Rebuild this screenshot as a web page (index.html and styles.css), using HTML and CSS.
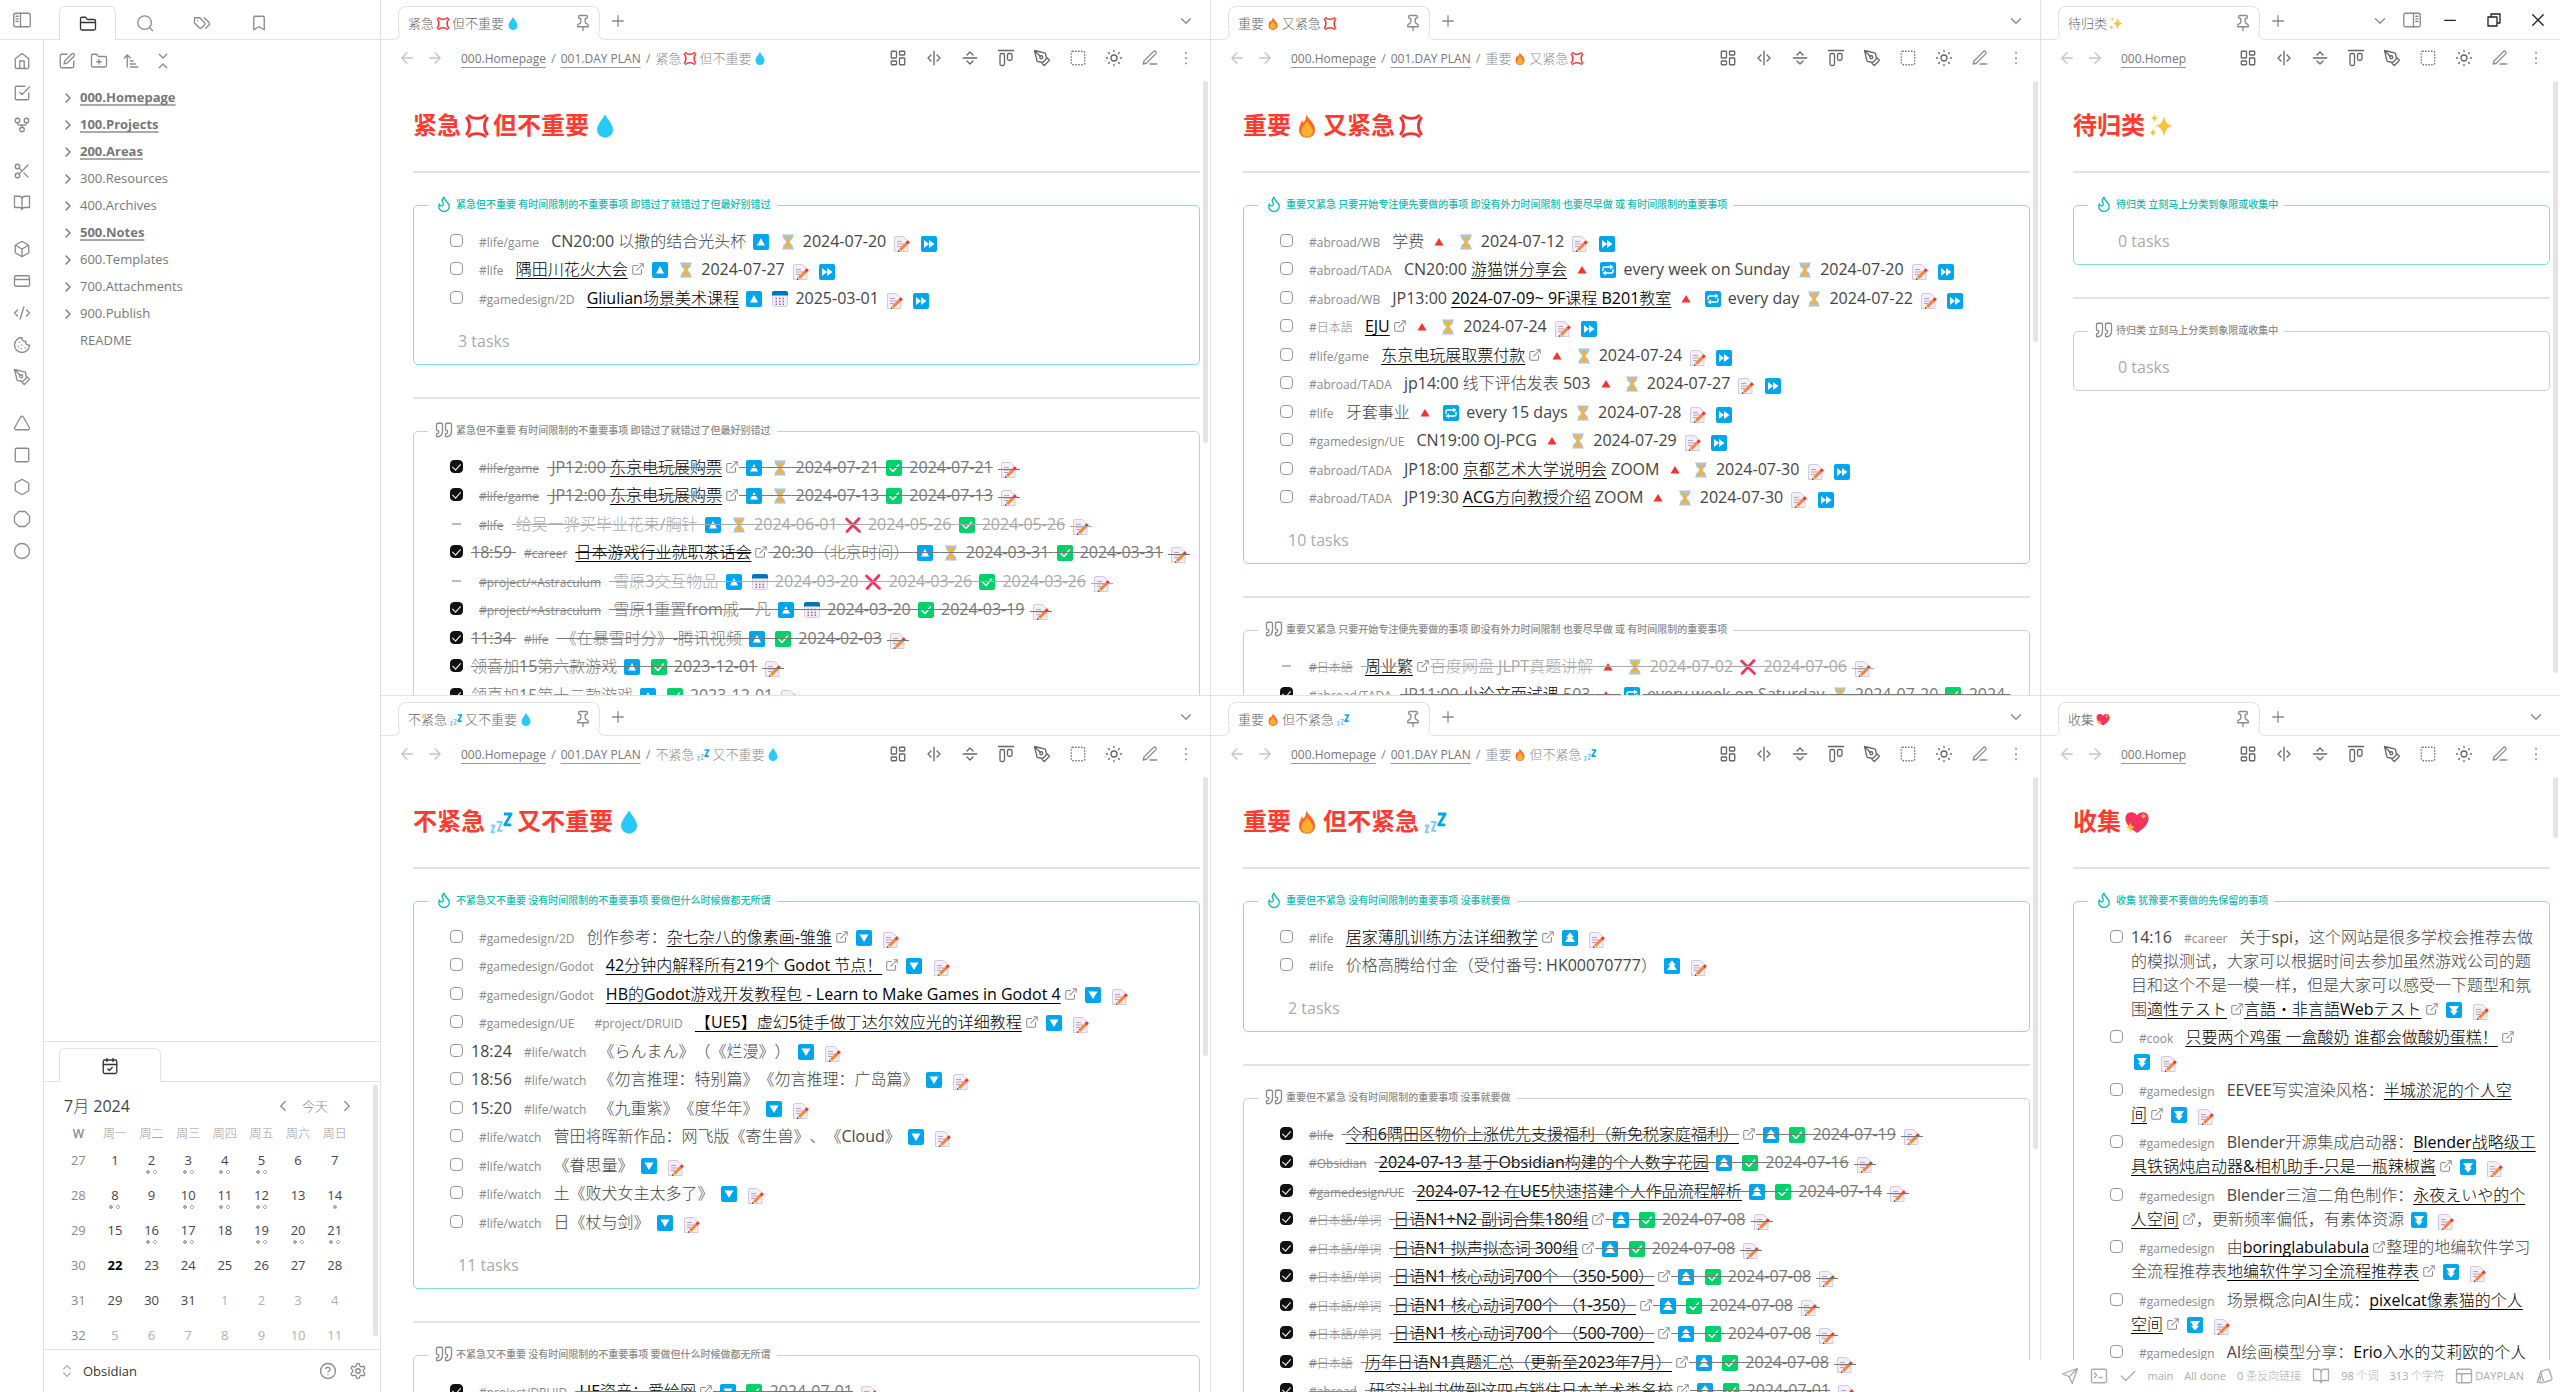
FILE: index.html
```html
<!DOCTYPE html>
<html lang="zh-CN">
<head>
<meta charset="utf-8">
<meta name="viewport" content="width=device-width, initial-scale=1">
<title>DAYPLAN - Obsidian</title>
<link rel="stylesheet" href="styles.css">
</head>
<body>
<svg class="sprite" aria-hidden="true">
  <!-- interface icons -->
  <symbol id="panel-left" viewBox="0 0 24 24"><rect x="1" y="3" width="22" height="18" rx="2.5"/><path d="M10 3v18M4 7h3M4 10.5h3M4 14h3"/></symbol>
  <symbol id="panel-right" viewBox="0 0 24 24"><rect x="1" y="3" width="22" height="18" rx="2.5"/><path d="M14 3v18M17 7h3M17 10.5h3M17 14h3"/></symbol>
  <symbol id="folder" viewBox="0 0 24 24"><path d="M20 20a2 2 0 0 0 2-2V8a2 2 0 0 0-2-2h-7.9a2 2 0 0 1-1.69-.9L9.6 3.9A2 2 0 0 0 7.93 3H4a2 2 0 0 0-2 2v13a2 2 0 0 0 2 2ZM2 10h20"/></symbol>
  <symbol id="search" viewBox="0 0 24 24"><circle cx="11.5" cy="11.5" r="9"/><path d="m22 22-4-4"/></symbol>
  <symbol id="tags" viewBox="0 0 24 24"><path d="M9 5H2v7l6.29 6.29c.94.94 2.48.94 3.42 0l3.58-3.58c.94-.94.94-2.48 0-3.42L9 5ZM6 9.01V9M15 5l6.3 6.3a2.4 2.4 0 0 1 0 3.4L17 19"/></symbol>
  <symbol id="bookmark" viewBox="0 0 24 24"><path d="m19 21-7-4-7 4V5a2 2 0 0 1 2-2h10a2 2 0 0 1 2 2v16z"/></symbol>
  <symbol id="home" viewBox="0 0 24 24"><path d="m3 9 9-7 9 7v11a2 2 0 0 1-2 2H5a2 2 0 0 1-2-2zM9 22V12h6v10"/></symbol>
  <symbol id="check-square" viewBox="0 0 24 24"><path d="m9 11 3 3L22 4M21 12v7a2 2 0 0 1-2 2H5a2 2 0 0 1-2-2V5a2 2 0 0 1 2-2h11"/></symbol>
  <symbol id="fork" viewBox="0 0 24 24"><circle cx="12" cy="18" r="3"/><circle cx="6" cy="6" r="3"/><circle cx="18" cy="6" r="3"/><path d="M18 9v1a2 2 0 0 1-2 2H8a2 2 0 0 1-2-2V9M12 12v3"/></symbol>
  <symbol id="scissors" viewBox="0 0 24 24"><circle cx="6" cy="6" r="3"/><circle cx="6" cy="18" r="3"/><path d="M20 4 8.12 15.88M14.47 14.48 20 20M8.12 8.12 12 12"/></symbol>
  <symbol id="book" viewBox="0 0 24 24"><path d="M2 3h6a4 4 0 0 1 4 4v14a3 3 0 0 0-3-3H2zM22 3h-6a4 4 0 0 0-4 4v14a3 3 0 0 1 3-3h7z"/></symbol>
  <symbol id="box" viewBox="0 0 24 24"><path d="M21 8a2 2 0 0 0-1-1.73l-7-4a2 2 0 0 0-2 0l-7 4A2 2 0 0 0 3 8v8a2 2 0 0 0 1 1.73l7 4a2 2 0 0 0 2 0l7-4A2 2 0 0 0 21 16ZM3.3 7l8.7 5 8.7-5M12 22V12"/></symbol>
  <symbol id="card" viewBox="0 0 24 24"><rect x="2" y="5" width="20" height="14" rx="2"/><path d="M2 10h20"/></symbol>
  <symbol id="code" viewBox="0 0 24 24"><path d="m18 16 4-4-4-4M6 8l-4 4 4 4M14.5 4l-5 16"/></symbol>
  <symbol id="cookie" viewBox="0 0 24 24"><path d="M12 2a10 10 0 1 0 10 10 4 4 0 0 1-5-5 4 4 0 0 1-5-5M8.5 8.5v.01M16 15.5v.01M12 12v.01M11 17v.01M7 14v.01"/></symbol>
  <symbol id="pen-tool" viewBox="0 0 24 24"><path d="m12 19 7-7 3 3-7 7-3-3zM18 13l-1.500-7.500L2 2l3.500 14.500L13 18l5-5zM2 2l7.586 7.586"/><circle cx="11" cy="11" r="2"/></symbol>
  <symbol id="triangle" viewBox="0 0 24 24"><path d="M13.73 4a2 2 0 0 0-3.460 0l-8 14A2 2 0 0 0 4 21h16a2 2 0 0 0 1.730-3Z"/></symbol>
  <symbol id="square" viewBox="0 0 24 24"><rect x="3" y="3" width="18" height="18" rx="2"/></symbol>
  <symbol id="hexagon" viewBox="0 0 24 24"><path d="M21 16V8a2 2 0 0 0-1-1.730l-7-4a2 2 0 0 0-2 0l-7 4A2 2 0 0 0 3 8v8a2 2 0 0 0 1 1.730l7 4a2 2 0 0 0 2 0l7-4A2 2 0 0 0 21 16z"/></symbol>
  <symbol id="octagon" viewBox="0 0 24 24"><path d="M7.860 2h8.280L22 7.860v8.280L16.140 22H7.860L2 16.140V7.860z"/></symbol>
  <symbol id="circle" viewBox="0 0 24 24"><circle cx="12" cy="12" r="10"/></symbol>
  <symbol id="compose" viewBox="0 0 24 24"><path d="M12 3H5a2 2 0 0 0-2 2v14a2 2 0 0 0 2 2h14a2 2 0 0 0 2-2v-7M18.400 2.600a2.100 2.100 0 0 1 3 3L12.600 14.400 8 16l1.400-4.600z"/></symbol>
  <symbol id="folder-plus" viewBox="0 0 24 24"><path d="M20 20a2 2 0 0 0 2-2V8a2 2 0 0 0-2-2h-7.900a2 2 0 0 1-1.690-.9L9.600 3.900A2 2 0 0 0 7.930 3H4a2 2 0 0 0-2 2v13a2 2 0 0 0 2 2ZM12 10v6M9 13h6"/></symbol>
  <symbol id="sort" viewBox="0 0 24 24"><path d="m3 8 4-4 4 4M7 4v16M11 12h4M11 16h7M11 20h10"/></symbol>
  <symbol id="collapse" viewBox="0 0 24 24"><path d="m7 21 5-5 5 5M7 3l5 5 5-5"/></symbol>
  <symbol id="calendar" viewBox="0 0 24 24"><rect x="3" y="4" width="18" height="18" rx="2"/><path d="M16 2v4M8 2v4M3 10h18M9 16l2 2 4-4"/></symbol>
  <symbol id="left" viewBox="0 0 24 24"><path d="m15 18-6-6 6-6"/></symbol>
  <symbol id="right" viewBox="0 0 24 24"><path d="m9 18 6-6-6-6"/></symbol>
  <symbol id="down" viewBox="0 0 24 24"><path d="m6 9 6 6 6-6"/></symbol>
  <symbol id="updown" viewBox="0 0 24 24"><path d="m7 15 5 5 5-5M7 9l5-5 5 5"/></symbol>
  <symbol id="help" viewBox="0 0 24 24"><circle cx="12" cy="12" r="10"/><path d="M9.090 9a3 3 0 0 1 5.830 1c0 2-3 3-3 3M12 17v.01"/></symbol>
  <symbol id="gear" viewBox="0 0 24 24"><path d="M12.220 2h-.44a2 2 0 0 0-2 2v.18a2 2 0 0 1-1 1.730l-.43.25a2 2 0 0 1-2 0l-.15-.08a2 2 0 0 0-2.730.73l-.22.38a2 2 0 0 0 .73 2.730l.15.1a2 2 0 0 1 1 1.720v.51a2 2 0 0 1-1 1.740l-.15.09a2 2 0 0 0-.73 2.730l.22.38a2 2 0 0 0 2.730.73l.15-.08a2 2 0 0 1 2 0l.43.25a2 2 0 0 1 1 1.730V20a2 2 0 0 0 2 2h.44a2 2 0 0 0 2-2v-.18a2 2 0 0 1 1-1.730l.43-.25a2 2 0 0 1 2 0l.15.08a2 2 0 0 0 2.730-.73l.22-.39a2 2 0 0 0-.73-2.730l-.15-.08a2 2 0 0 1-1-1.740v-.5a2 2 0 0 1 1-1.740l.15-.09a2 2 0 0 0 .73-2.730l-.22-.38a2 2 0 0 0-2.730-.73l-.15.08a2 2 0 0 1-2 0l-.43-.25a2 2 0 0 1-1-1.730V4a2 2 0 0 0-2-2z"/><circle cx="12" cy="12" r="3"/></symbol>
  <symbol id="pin" viewBox="0 0 24 24"><path d="M12 17v5M5 17h14v-1.760a2 2 0 0 0-1.110-1.790l-1.780-.9A2 2 0 0 1 15 10.760V6h1a2 2 0 0 0 0-4H8a2 2 0 0 0 0 4h1v4.760a2 2 0 0 1-1.110 1.790l-1.780.9A2 2 0 0 0 5 15.240Z"/></symbol>
  <symbol id="plus" viewBox="0 0 24 24"><path d="M5 12h14M12 5v14"/></symbol>
  <symbol id="back" viewBox="0 0 24 24"><path d="m12 19-7-7 7-7M19 12H5"/></symbol>
  <symbol id="forward" viewBox="0 0 24 24"><path d="M5 12h14M12 5l7 7-7 7"/></symbol>
  <symbol id="dashboard" viewBox="0 0 24 24"><rect x="3" y="3" width="7" height="9" rx="1"/><rect x="14" y="3" width="7" height="5" rx="1"/><rect x="14" y="12" width="7" height="9" rx="1"/><rect x="3" y="16" width="7" height="5" rx="1"/></symbol>
  <symbol id="split-v" viewBox="0 0 24 24"><path d="M12 3v18M8 8l-4 4 4 4M16 16l4-4-4-4"/></symbol>
  <symbol id="split-h" viewBox="0 0 24 24"><path d="M3 12h18M8 8l4-4 4 4M16 16l-4 4-4-4"/></symbol>
  <symbol id="align-top" viewBox="0 0 24 24"><path d="M22 2H2"/><rect x="4" y="6" width="6" height="16" rx="2"/><rect x="14" y="6" width="6" height="9" rx="2"/></symbol>
  <symbol id="select" viewBox="0 0 24 24"><rect x="3" y="3" width="18" height="18" rx="2" stroke-dasharray=".6 3.300"/></symbol>
  <symbol id="sun" viewBox="0 0 24 24"><circle cx="12" cy="12" r="4"/><path d="M12 2v1.500M12 20.500V22M4.930 4.930l1 1M18.070 18.070l1 1M2 12h1.500M20.500 12H22M5.930 18.070l-1 1M19.070 4.930l-1 1"/></symbol>
  <symbol id="edit" viewBox="0 0 24 24"><path d="M12 20h9M16.500 3.500a2.120 2.120 0 0 1 3 3L7 19l-4 1 1-4Z"/></symbol>
  <symbol id="more" viewBox="0 0 24 24"><path d="M12 4.500v1M12 11.500v1M12 18.500v1"/></symbol>
  <symbol id="flame" viewBox="0 0 24 24"><path d="M8.500 14.500A2.500 2.500 0 0 0 11 12c0-1.380-.5-2-1-3-1.072-2.143-.224-4.054 2-6 .5 2.500 2 4.900 4 6.500 2 1.600 3 3.500 3 5.500a7 7 0 1 1-14 0c0-1.153.433-2.294 1-3a2.500 2.500 0 0 0 2.500 2.500z"/></symbol>
  <symbol id="quote" viewBox="0 0 24 24"><path d="M3 21c3 0 7-1 7-8V5c0-1.250-.756-2.017-2-2H4c-1.250 0-2 .75-2 1.972V11c0 1.250.75 2 2 2 1 0 1 0 1 1v1c0 1-1 2-2 2s-1 .008-1 1.031V20c0 1 0 1 1 1zM15 21c3 0 7-1 7-8V5c0-1.250-.757-2.017-2-2h-4c-1.250 0-2 .75-2 1.972V11c0 1.250.75 2 2 2h.75c0 2.250.25 4-2.750 4v3c0 1 0 1 1 1z"/></symbol>
  <symbol id="ext" viewBox="0 0 24 24"><path d="M18 13v6a2 2 0 0 1-2 2H5a2 2 0 0 1-2-2V8a2 2 0 0 1 2-2h6M15 3h6v6M10 14 21 3"/></symbol>
  <symbol id="min" viewBox="0 0 24 24"><path d="M5 12.500h14"/></symbol>
  <symbol id="restore" viewBox="0 0 24 24"><path d="M4 8h12v12H4zM8 8V4h12v12h-4"/></symbol>
  <symbol id="close" viewBox="0 0 24 24"><path d="m5 5 14 14M19 5 5 19"/></symbol>
  <symbol id="send" viewBox="0 0 24 24"><path d="m22 2-7 20-4-9-9-4ZM22 2 11 13"/></symbol>
  <symbol id="terminal" viewBox="0 0 24 24"><rect x="2" y="3" width="20" height="18" rx="2"/><path d="m6 8 3 3-3 3M12 14h4"/></symbol>
  <symbol id="check" viewBox="0 0 24 24"><path d="M21 6 9 18l-6-6"/></symbol>
  <symbol id="layout" viewBox="0 0 24 24"><rect x="2" y="3" width="20" height="18" rx="2"/><path d="M2 9h20M9 21V9"/></symbol>
  <symbol id="leaf" viewBox="0 0 24 24"><rect x="9" y="4" width="12" height="15" rx="2" transform="rotate(-18 15 11)"/><path d="M8 6 3 20l7 1M7 13v5"/></symbol>
  <!-- colour glyphs, each in a 22 by 16 cell -->
  <symbol id="g-up" viewBox="0 0 22 16"><rect x="3" width="16" height="16" rx="2" fill="#00a6ed"/><path fill="#fff" d="m11 4 4 7.500H7z"/><path class="strike" d="M0 7.500h22"/></symbol>
  <symbol id="g-down" viewBox="0 0 22 16"><rect x="3" width="16" height="16" rx="2" fill="#00a6ed"/><path fill="#fff" d="M11 12 6.500 4.500h9z"/><path class="strike" d="M0 7.500h22"/></symbol>
  <symbol id="g-up2" viewBox="0 0 22 16"><rect x="3" width="16" height="16" rx="2" fill="#00a6ed"/><path fill="#fff" d="m11 2.500 4 4.700h-2.300l3.300 4.800H6l3.300-4.800H7z"/><path class="strike" d="M0 7.500h22"/></symbol>
  <symbol id="g-down2" viewBox="0 0 22 16"><rect x="3" width="16" height="16" rx="2" fill="#00a6ed"/><path fill="#fff" d="m11 13.500 4-4.700h-2.300L16 4H6l3.300 4.800H7z"/><path class="strike" d="M0 7.500h22"/></symbol>
  <symbol id="g-skip" viewBox="0 0 22 16"><rect x="3" width="16" height="16" rx="2" fill="#00a6ed"/><path fill="#fff" d="M6 4l5 4-5 4zM11 4l5.500 4-5.500 4z"/></symbol>
  <symbol id="g-repeat" viewBox="0 0 22 16"><rect x="3" width="16" height="16" rx="2" fill="#00a6ed"/><path fill="none" stroke="#fff" stroke-width="1.400" d="M6 9V6.500q0-1.500 1.500-1.500H14M16 7v2.500q0 1.500-1.500 1.500H8"/><path fill="#fff" d="M13 2.500 16.500 5 13 7.500zM9 8.500 5.500 11 9 13.500z"/></symbol>
  <symbol id="g-high" viewBox="0 0 22 16"><path fill="#f8312f" d="m11 4 4.500 7.500h-9z"/><path class="strike" d="M0 7.500h22"/></symbol>
  <symbol id="g-wait" viewBox="0 0 22 16"><path fill="#9bc8ea" d="M6 1h10v2c0 2.500-3.200 3.500-3.200 5s3.200 2.500 3.200 5v2H6v-2c0-2.500 3.200-3.500 3.200-5S6 5.500 6 3z"/><path fill="#ffb02e" d="M7.300 3h7.400c0 2-2.900 3-2.900 5 0 1.500 2.900 3 2.900 5.500H7.300c0-2.500 2.900-4 2.900-5.500 0-2-2.900-3-2.900-5z"/><path stroke="#c7b9ad" stroke-width="1.200" d="M5 1h12M5 15h12"/><path class="strike" d="M0 7.500h22"/></symbol>
  <symbol id="g-cal" viewBox="0 0 22 16"><rect x="3.500" y=".5" width="15" height="15" rx="2" fill="#f3eef8" stroke="#c9bdd6" stroke-width=".7"/><path fill="#0074ba" d="M5 0h12q2 0 2 2v2.500H3V2q0-2 2-2z"/><path stroke="#8d65c5" stroke-width="1.500" stroke-dasharray="1.500 2" d="M6.500 7.500H16M6.500 10.500H16M6.500 13.200H16"/><path class="strike" d="M0 7.500h22"/></symbol>
  <symbol id="g-done" viewBox="0 0 22 16"><rect x="3" width="16" height="16" rx="2" fill="#00d26a"/><path fill="none" stroke="#fff" stroke-width="1.600" stroke-linecap="round" stroke-linejoin="round" d="m7 8.500 3 3 5.500-6.500"/><path class="strike" d="M0 7.500h22"/></symbol>
  <symbol id="g-cross" viewBox="0 0 22 16"><path stroke="#f92f60" stroke-width="2.600" stroke-linecap="round" d="m4.500 2 13 12.500M17 1.500 5 14.500"/><path class="strike" d="M0 7.500h22"/></symbol>
  <symbol id="g-memo" viewBox="0 0 22 16"><path fill="#f3eef8" stroke="#c9bdd6" stroke-width=".8" d="M5 .5h7.500L17 5v10.500H3.500V2Q3.500.5 5 .5z"/><path stroke="#b4a2cc" d="M6 5.500h5M6 8h7M6 10.500h4"/><path stroke="#ff822d" stroke-width="3" d="m9 14 6.500-6.500"/><path stroke="#f8312f" stroke-width="3" d="m15.500 7.500 2.300-2.300"/><path fill="#5a3a20" d="M7 16v-2l2 1z"/><path class="strike" d="M0 7.500h22"/></symbol>
  <symbol id="g-anger" viewBox="0 0 22 16"><path fill="none" stroke="#f8312f" stroke-width="1.900" stroke-linecap="round" d="M4 2.500C6.500 5.500 6.500 10.500 4 13.500M18 2.500C15.500 5.500 15.500 10.500 18 13.500M5.500 1C8 3.400 14 3.400 16.500 1M5.500 15C8 12.600 14 12.600 16.500 15"/></symbol>
  <symbol id="g-drop" viewBox="0 0 22 16"><path fill="#26c9fc" d="M11 0c1 2.500 5.500 7 5.500 10.500a5.500 5.500 0 0 1-11 0C5.500 7 10 2.500 11 0z"/></symbol>
  <symbol id="g-fire" viewBox="0 0 22 16"><path fill="#ff6723" d="M10.500 0c.5 3 6 5.500 6 10.500 0 3.500-2.500 5.500-5.500 5.500s-5.500-2-5.500-5.500c0-3 1.500-4.500 2-6.500.5.500.8 1.500.8 2C9.800 4.500 10.500 2.500 10.500 0z"/><path fill="#ffb02e" d="M11 4.500c.5 2 4 4 4 7 0 2.500-1.800 4-4 4s-4-1.500-4-4C7 8.500 10.500 6.500 11 4.500z"/></symbol>
  <symbol id="g-zzz" viewBox="0 0 22 16"><path fill="none" stroke="#00a6ed" stroke-width="1.900" d="M13 2.500h5L13.500 10h4.500"/><path fill="none" stroke="#83cbff" stroke-width="1.400" d="M8 8h3.500L9 14h3M4 10.500h2.500L4.500 15H7"/></symbol>
  <symbol id="g-spark" viewBox="0 0 22 16"><path fill="#f9c23c" d="M13 1c1 4.500 2 6 6 7-4 1-5 2.500-6 7.500-1-5-2-6.500-6-7.500 4-1 5-2.500 6-7zM6.500 0c.4 1.800.8 2.200 2.500 2.600-1.700.4-2.100.8-2.500 2.600C6.100 3.400 5.700 3 4 2.600 5.700 2.200 6.100 1.800 6.500 0zM5.500 9.500c.5 2 .9 2.600 2.800 3-1.900.5-2.300 1-2.800 3-.5-2-.9-2.500-2.800-3 1.900-.4 2.300-1 2.800-3z"/></symbol>
  <symbol id="g-heart" viewBox="0 0 22 16"><path fill="#f8315f" d="M11 15.500C6 12.500 3 9 3 5.500 3 .5 9 0 11 3.500 13 0 19 .5 19 5.500c0 3.500-3 7-8 10z"/><path fill="#f9c23c" d="M15.500 1.500c.4 1.600.8 2 2.300 2.400-1.500.4-1.900.8-2.300 2.400-.4-1.600-.8-2-2.300-2.400 1.500-.4 1.900-.8 2.300-2.400zM6.500 8c.6 2.500 1 3 3.300 3.600-2.300.6-2.700 1.200-3.300 3.700-.6-2.500-1-3.100-3.300-3.700C5.500 11 5.900 10.500 6.500 8z"/></symbol>
</svg>

<div class="app">
  <nav class="ribbon">
    <div class="ribbon-top"><button class="icon" aria-label="侧边栏"><svg><use href="#panel-left"/></svg></button></div>
    <div class="ribbon-group">
      <button class="icon"><svg><use href="#home"/></svg></button>
      <button class="icon"><svg><use href="#check-square"/></svg></button>
      <button class="icon"><svg><use href="#fork"/></svg></button>
    </div>
    <div class="ribbon-group">
      <button class="icon"><svg><use href="#scissors"/></svg></button>
      <button class="icon"><svg><use href="#book"/></svg></button>
    </div>
    <div class="ribbon-group">
      <button class="icon"><svg><use href="#box"/></svg></button>
      <button class="icon"><svg><use href="#card"/></svg></button>
      <button class="icon"><svg><use href="#code"/></svg></button>
      <button class="icon"><svg><use href="#cookie"/></svg></button>
      <button class="icon"><svg><use href="#pen-tool"/></svg></button>
    </div>
    <div class="ribbon-group">
      <button class="icon"><svg><use href="#triangle"/></svg></button>
      <button class="icon"><svg><use href="#square"/></svg></button>
      <button class="icon"><svg><use href="#hexagon"/></svg></button>
      <button class="icon"><svg><use href="#octagon"/></svg></button>
      <button class="icon"><svg><use href="#circle"/></svg></button>
    </div>
  </nav>

  <aside class="sidebar">
    <div class="side-tabs">
      <button class="icon side-tab active"><svg><use href="#folder"/></svg></button>
      <button class="icon side-tab"><svg><use href="#search"/></svg></button>
      <button class="icon side-tab"><svg><use href="#tags"/></svg></button>
      <button class="icon side-tab"><svg><use href="#bookmark"/></svg></button>
    </div>
    <div class="files">
      <div class="file-actions">
        <button class="icon"><svg><use href="#compose"/></svg></button>
        <button class="icon"><svg><use href="#folder-plus"/></svg></button>
        <button class="icon"><svg><use href="#sort"/></svg></button>
        <button class="icon"><svg><use href="#collapse"/></svg></button>
      </div>
      <ul class="tree">
        <li class="key"><svg><use href="#right"/></svg><span>000.Homepage</span></li>
        <li class="key"><svg><use href="#right"/></svg><span>100.Projects</span></li>
        <li class="key"><svg><use href="#right"/></svg><span>200.Areas</span></li>
        <li><svg><use href="#right"/></svg><span>300.Resources</span></li>
        <li><svg><use href="#right"/></svg><span>400.Archives</span></li>
        <li class="key"><svg><use href="#right"/></svg><span>500.Notes</span></li>
        <li><svg><use href="#right"/></svg><span>600.Templates</span></li>
        <li><svg><use href="#right"/></svg><span>700.Attachments</span></li>
        <li><svg><use href="#right"/></svg><span>900.Publish</span></li>
        <li><svg></svg><span>README</span></li>
      </ul>
    </div>
    <section class="calendar">
      <div class="side-tabs"><button class="icon side-tab wide active"><svg><use href="#calendar"/></svg></button></div>
      <div class="calendar-body">
        <div class="month">
          <span class="month-name">7月 2024</span>
          <button class="icon"><svg><use href="#left"/></svg></button>
          <button class="today">今天</button>
          <button class="icon"><svg><use href="#right"/></svg></button>
        </div>
        <table>
          <thead><tr><th class="w">W</th><th>周一</th><th>周二</th><th>周三</th><th>周四</th><th>周五</th><th>周六</th><th>周日</th></tr></thead>
          <tbody>
            <tr><td class="wk">27</td><td>1</td><td class="dot ring">2</td><td class="dot ring">3</td><td class="dot ring">4</td><td class="dot ring">5</td><td>6</td><td>7</td></tr>
            <tr><td class="wk">28</td><td class="dot ring">8</td><td>9</td><td class="dot ring">10</td><td class="dot ring">11</td><td class="dot ring">12</td><td>13</td><td class="dot">14</td></tr>
            <tr><td class="wk">29</td><td>15</td><td class="dot ring">16</td><td class="dot ring">17</td><td>18</td><td class="dot ring">19</td><td class="dot ring">20</td><td class="dot ring">21</td></tr>
            <tr><td class="wk">30</td><td class="now">22</td><td>23</td><td>24</td><td>25</td><td>26</td><td>27</td><td>28</td></tr>
            <tr><td class="wk">31</td><td>29</td><td>30</td><td>31</td><td class="out">1</td><td class="out">2</td><td class="out">3</td><td class="out">4</td></tr>
            <tr><td class="wk">32</td><td class="out">5</td><td class="out">6</td><td class="out">7</td><td class="out">8</td><td class="out">9</td><td class="out">10</td><td class="out">11</td></tr>
          </tbody>
        </table>
        <div class="thumb"></div>
      </div>
    </section>
    <footer class="vault">
      <svg><use href="#updown"/></svg><span>Obsidian</span>
      <button class="icon"><svg><use href="#help"/></svg></button>
      <button class="icon"><svg><use href="#gear"/></svg></button>
    </footer>
  </aside>

  <main class="workspace">
    <section class="pane">
      <div class="tabbar">
        <div class="tab"><span>紧急<svg class="g"><use href="#g-anger"/></svg>但不重要<svg class="g"><use href="#g-drop"/></svg></span><button class="icon"><svg><use href="#pin"/></svg></button></div>
        <button class="icon add"><svg><use href="#plus"/></svg></button>
        <button class="icon list"><svg><use href="#down"/></svg></button>
      </div>
      <header class="view-header">
        <button class="icon off"><svg><use href="#back"/></svg></button><button class="icon off"><svg><use href="#forward"/></svg></button>
        <div class="crumbs"><a href="#">000.Homepage</a><i>/</i><a href="#">001.DAY PLAN</a><i>/</i><span>紧急<svg class="g"><use href="#g-anger"/></svg>但不重要<svg class="g"><use href="#g-drop"/></svg></span></div>
        <div class="actions"><button class="icon"><svg><use href="#dashboard"/></svg></button><button class="icon"><svg><use href="#split-v"/></svg></button><button class="icon"><svg><use href="#split-h"/></svg></button><button class="icon"><svg><use href="#align-top"/></svg></button><button class="icon"><svg><use href="#pen-tool"/></svg></button><button class="icon"><svg><use href="#select"/></svg></button><button class="icon"><svg><use href="#sun"/></svg></button><button class="icon soft"><svg><use href="#edit"/></svg></button><button class="icon"><svg><use href="#more"/></svg></button></div>
      </header>
      <article class="note">
        <h1>紧急<svg class="g"><use href="#g-anger"/></svg>但不重要<svg class="g"><use href="#g-drop"/></svg></h1>
        <hr>
        <fieldset class="todo">
          <legend><svg><use href="#flame"/></svg>紧急但不重要 有时间限制的不重要事项 即错过了就错过了但最好别错过</legend>
          <ul class="tasks">
            <li><input type="checkbox" id="a1"><label for="a1"><a class="tag" href="#">#life/game</a> CN20:00 以撒的结合光头杯 <svg class="g"><use href="#g-up"/></svg> <svg class="g"><use href="#g-wait"/></svg> 2024-07-20 <svg class="g memo"><use href="#g-memo"/></svg> <svg class="g skip"><use href="#g-skip"/></svg></label></li>
            <li><input type="checkbox" id="a2"><label for="a2"><a class="tag" href="#">#life</a> <a href="#">隅田川花火大会</a><svg class="ext"><use href="#ext"/></svg> <svg class="g"><use href="#g-up"/></svg> <svg class="g"><use href="#g-wait"/></svg> 2024-07-27 <svg class="g memo"><use href="#g-memo"/></svg> <svg class="g skip"><use href="#g-skip"/></svg></label></li>
            <li><input type="checkbox" id="a3"><label for="a3"><a class="tag" href="#">#gamedesign/2D</a> <a href="#">Gliulian场景美术课程</a> <svg class="g"><use href="#g-up"/></svg> <svg class="g"><use href="#g-cal"/></svg> 2025-03-01 <svg class="g memo"><use href="#g-memo"/></svg> <svg class="g skip"><use href="#g-skip"/></svg></label></li>
          </ul>
          <p class="count">3 tasks</p>
        </fieldset>
        <hr>
        <fieldset>
          <legend><svg><use href="#quote"/></svg>紧急但不重要 有时间限制的不重要事项 即错过了就错过了但最好别错过</legend>
          <ul class="tasks">
            <li class="done"><input type="checkbox" checked id="b1"><label for="b1"><a class="tag" href="#">#life/game</a><s>&nbsp;JP12:00 <a href="#">东京电玩展购票</a><svg class="ext"><use href="#ext"/></svg> <svg class="g"><use href="#g-up"/></svg> <svg class="g"><use href="#g-wait"/></svg> 2024-07-21 <svg class="g"><use href="#g-done"/></svg> 2024-07-21</s> <svg class="g memo"><use href="#g-memo"/></svg></label></li>
            <li class="done"><input type="checkbox" checked id="b2"><label for="b2"><a class="tag" href="#">#life/game</a><s>&nbsp;JP12:00 <a href="#">东京电玩展购票</a><svg class="ext"><use href="#ext"/></svg> <svg class="g"><use href="#g-up"/></svg> <svg class="g"><use href="#g-wait"/></svg> 2024-07-13 <svg class="g"><use href="#g-done"/></svg> 2024-07-13</s> <svg class="g memo"><use href="#g-memo"/></svg></label></li>
            <li class="done dropped"><input type="checkbox" id="b3"><label for="b3"><a class="tag" href="#">#life</a><s>&nbsp;给吴一骅买毕业花束/胸针 <svg class="g"><use href="#g-up"/></svg> <svg class="g"><use href="#g-wait"/></svg> 2024-06-01 <svg class="g"><use href="#g-cross"/></svg> 2024-05-26 <svg class="g"><use href="#g-done"/></svg> 2024-05-26</s> <svg class="g memo"><use href="#g-memo"/></svg></label></li>
            <li class="done"><input type="checkbox" checked id="b4"><label class="keep" for="b4"><s>18:59 </s><a class="tag" href="#">#career</a><a href="#"><s>日本游戏行业就职茶话会</s></a><svg class="ext"><use href="#ext"/></svg><s> 20:30（北京时间） <svg class="g"><use href="#g-up"/></svg> <svg class="g"><use href="#g-wait"/></svg> 2024-03-31 <svg class="g"><use href="#g-done"/></svg> 2024-03-31</s> <svg class="g memo"><use href="#g-memo"/></svg></label></li>
            <li class="done dropped"><input type="checkbox" id="b5"><label for="b5"><a class="tag" href="#">#project/×Astraculum</a><s>&nbsp;雪原3交互物品 <svg class="g"><use href="#g-up"/></svg> <svg class="g"><use href="#g-cal"/></svg> 2024-03-20 <svg class="g"><use href="#g-cross"/></svg> 2024-03-26 <svg class="g"><use href="#g-done"/></svg> 2024-03-26</s> <svg class="g memo"><use href="#g-memo"/></svg></label></li>
            <li class="done"><input type="checkbox" checked id="b6"><label for="b6"><a class="tag" href="#">#project/×Astraculum</a><s>&nbsp;雪原1重置from戚一凡 <svg class="g"><use href="#g-up"/></svg> <svg class="g"><use href="#g-cal"/></svg> 2024-03-20 <svg class="g"><use href="#g-done"/></svg> 2024-03-19</s> <svg class="g memo"><use href="#g-memo"/></svg></label></li>
            <li class="done"><input type="checkbox" checked id="b7"><label for="b7"><s>11:34 </s><a class="tag" href="#">#life</a><s>&nbsp;《在暴雪时分》-腾讯视频 <svg class="g"><use href="#g-up"/></svg> <svg class="g"><use href="#g-done"/></svg> 2024-02-03</s> <svg class="g memo"><use href="#g-memo"/></svg></label></li>
            <li class="done"><input type="checkbox" checked id="b8"><label for="b8"><s>领喜加15第六款游戏 <svg class="g"><use href="#g-up"/></svg> <svg class="g"><use href="#g-done"/></svg> 2023-12-01</s> <svg class="g memo"><use href="#g-memo"/></svg></label></li>
            <li class="done"><input type="checkbox" checked id="b9"><label for="b9"><s>领喜加15第十二款游戏 <svg class="g"><use href="#g-up"/></svg> <svg class="g"><use href="#g-done"/></svg> 2023-12-01</s> <svg class="g memo"><use href="#g-memo"/></svg></label></li>
          </ul>
        </fieldset>
      </article>
      <div class="thumb" style="height:362px"></div>
    </section>

    <section class="pane">
      <div class="tabbar">
        <div class="tab"><span>重要<svg class="g"><use href="#g-fire"/></svg>又紧急<svg class="g"><use href="#g-anger"/></svg></span><button class="icon"><svg><use href="#pin"/></svg></button></div>
        <button class="icon add"><svg><use href="#plus"/></svg></button>
        <button class="icon list"><svg><use href="#down"/></svg></button>
      </div>
      <header class="view-header">
        <button class="icon off"><svg><use href="#back"/></svg></button><button class="icon off"><svg><use href="#forward"/></svg></button>
        <div class="crumbs"><a href="#">000.Homepage</a><i>/</i><a href="#">001.DAY PLAN</a><i>/</i><span>重要<svg class="g"><use href="#g-fire"/></svg>又紧急<svg class="g"><use href="#g-anger"/></svg></span></div>
        <div class="actions"><button class="icon"><svg><use href="#dashboard"/></svg></button><button class="icon"><svg><use href="#split-v"/></svg></button><button class="icon"><svg><use href="#split-h"/></svg></button><button class="icon"><svg><use href="#align-top"/></svg></button><button class="icon"><svg><use href="#pen-tool"/></svg></button><button class="icon"><svg><use href="#select"/></svg></button><button class="icon"><svg><use href="#sun"/></svg></button><button class="icon soft"><svg><use href="#edit"/></svg></button><button class="icon"><svg><use href="#more"/></svg></button></div>
      </header>
      <article class="note">
        <h1>重要<svg class="g"><use href="#g-fire"/></svg>又紧急<svg class="g"><use href="#g-anger"/></svg></h1>
        <hr>
        <fieldset class="todo">
          <legend><svg><use href="#flame"/></svg>重要又紧急 只要开始专注便先要做的事项 即没有外力时间限制 也要尽早做 或 有时间限制的重要事项</legend>
          <ul class="tasks">
            <li><input type="checkbox" id="c1"><label for="c1"><a class="tag" href="#">#abroad/WB</a> 学费 <svg class="g"><use href="#g-high"/></svg> <svg class="g"><use href="#g-wait"/></svg> 2024-07-12 <svg class="g memo"><use href="#g-memo"/></svg> <svg class="g skip"><use href="#g-skip"/></svg></label></li>
            <li><input type="checkbox" id="c2"><label for="c2"><a class="tag" href="#">#abroad/TADA</a> CN20:00 <a href="#">游猫饼分享会</a> <svg class="g"><use href="#g-high"/></svg> <svg class="g"><use href="#g-repeat"/></svg> every week on Sunday <svg class="g"><use href="#g-wait"/></svg> 2024-07-20 <svg class="g memo"><use href="#g-memo"/></svg> <svg class="g skip"><use href="#g-skip"/></svg></label></li>
            <li><input type="checkbox" id="c3"><label for="c3"><a class="tag" href="#">#abroad/WB</a> JP13:00 <a href="#">2024-07-09~ 9F课程 B201教室</a> <svg class="g"><use href="#g-high"/></svg> <svg class="g"><use href="#g-repeat"/></svg> every day <svg class="g"><use href="#g-wait"/></svg> 2024-07-22 <svg class="g memo"><use href="#g-memo"/></svg> <svg class="g skip"><use href="#g-skip"/></svg></label></li>
            <li><input type="checkbox" id="c4"><label for="c4"><a class="tag" href="#">#日本語</a> <a href="#">EJU</a><svg class="ext"><use href="#ext"/></svg> <svg class="g"><use href="#g-high"/></svg> <svg class="g"><use href="#g-wait"/></svg> 2024-07-24 <svg class="g memo"><use href="#g-memo"/></svg> <svg class="g skip"><use href="#g-skip"/></svg></label></li>
            <li><input type="checkbox" id="c5"><label for="c5"><a class="tag" href="#">#life/game</a> <a href="#">东京电玩展取票付款</a><svg class="ext"><use href="#ext"/></svg> <svg class="g"><use href="#g-high"/></svg> <svg class="g"><use href="#g-wait"/></svg> 2024-07-24 <svg class="g memo"><use href="#g-memo"/></svg> <svg class="g skip"><use href="#g-skip"/></svg></label></li>
            <li><input type="checkbox" id="c6"><label for="c6"><a class="tag" href="#">#abroad/TADA</a> jp14:00 线下评估发表 503 <svg class="g"><use href="#g-high"/></svg> <svg class="g"><use href="#g-wait"/></svg> 2024-07-27 <svg class="g memo"><use href="#g-memo"/></svg> <svg class="g skip"><use href="#g-skip"/></svg></label></li>
            <li><input type="checkbox" id="c7"><label for="c7"><a class="tag" href="#">#life</a> 牙套事业 <svg class="g"><use href="#g-high"/></svg> <svg class="g"><use href="#g-repeat"/></svg> every 15 days <svg class="g"><use href="#g-wait"/></svg> 2024-07-28 <svg class="g memo"><use href="#g-memo"/></svg> <svg class="g skip"><use href="#g-skip"/></svg></label></li>
            <li><input type="checkbox" id="c8"><label for="c8"><a class="tag" href="#">#gamedesign/UE</a> CN19:00 OJ-PCG <svg class="g"><use href="#g-high"/></svg> <svg class="g"><use href="#g-wait"/></svg> 2024-07-29 <svg class="g memo"><use href="#g-memo"/></svg> <svg class="g skip"><use href="#g-skip"/></svg></label></li>
            <li><input type="checkbox" id="c9"><label for="c9"><a class="tag" href="#">#abroad/TADA</a> JP18:00 <a href="#">京都艺术大学说明会</a> ZOOM <svg class="g"><use href="#g-high"/></svg> <svg class="g"><use href="#g-wait"/></svg> 2024-07-30 <svg class="g memo"><use href="#g-memo"/></svg> <svg class="g skip"><use href="#g-skip"/></svg></label></li>
            <li><input type="checkbox" id="c10"><label for="c10"><a class="tag" href="#">#abroad/TADA</a> JP19:30 <a href="#">ACG方向教授介绍</a> ZOOM <svg class="g"><use href="#g-high"/></svg> <svg class="g"><use href="#g-wait"/></svg> 2024-07-30 <svg class="g memo"><use href="#g-memo"/></svg> <svg class="g skip"><use href="#g-skip"/></svg></label></li>
          </ul>
          <p class="count">10 tasks</p>
        </fieldset>
        <hr>
        <fieldset>
          <legend><svg><use href="#quote"/></svg>重要又紧急 只要开始专注便先要做的事项 即没有外力时间限制 也要尽早做 或 有时间限制的重要事项</legend>
          <ul class="tasks">
            <li class="done dropped"><input type="checkbox" id="d1"><label for="d1"><a class="tag" href="#">#日本語</a><s>&nbsp;<a href="#">周业繁</a><svg class="ext"><use href="#ext"/></svg>百度网盘 JLPT真题讲解 <svg class="g"><use href="#g-high"/></svg> <svg class="g"><use href="#g-wait"/></svg> 2024-07-02 <svg class="g"><use href="#g-cross"/></svg> 2024-07-06</s> <svg class="g memo"><use href="#g-memo"/></svg></label></li>
            <li class="done"><input type="checkbox" checked id="d2"><label for="d2"><a class="tag" href="#">#abroad/TADA</a><s>&nbsp;JP11:00 <a href="#">小论文面试课</a> 503 <svg class="g"><use href="#g-high"/></svg> <svg class="g"><use href="#g-repeat"/></svg> every week on Saturday <svg class="g"><use href="#g-wait"/></svg> 2024-07-20 <svg class="g"><use href="#g-done"/></svg> 2024-07-20</s> <svg class="g memo"><use href="#g-memo"/></svg></label></li>
          </ul>
        </fieldset>
      </article>
      <div class="thumb" style="height:261px"></div>
    </section>

    <section class="pane">
      <div class="tabbar window">
        <div class="tab"><span>待归类<svg class="g"><use href="#g-spark"/></svg></span><button class="icon"><svg><use href="#pin"/></svg></button></div>
        <button class="icon add"><svg><use href="#plus"/></svg></button>
        <button class="icon list"><svg><use href="#down"/></svg></button>
        <button class="icon list-end"><svg><use href="#panel-right"/></svg></button>
        <button class="icon win"><svg><use href="#min"/></svg></button>
        <button class="icon win"><svg><use href="#restore"/></svg></button>
        <button class="icon win"><svg><use href="#close"/></svg></button>
      </div>
      <header class="view-header">
        <button class="icon off"><svg><use href="#back"/></svg></button><button class="icon off"><svg><use href="#forward"/></svg></button>
        <div class="crumbs"><a href="#">000.Homepage</a></div>
        <div class="actions"><button class="icon"><svg><use href="#dashboard"/></svg></button><button class="icon"><svg><use href="#split-v"/></svg></button><button class="icon"><svg><use href="#split-h"/></svg></button><button class="icon"><svg><use href="#align-top"/></svg></button><button class="icon"><svg><use href="#pen-tool"/></svg></button><button class="icon"><svg><use href="#select"/></svg></button><button class="icon"><svg><use href="#sun"/></svg></button><button class="icon soft"><svg><use href="#edit"/></svg></button><button class="icon"><svg><use href="#more"/></svg></button></div>
      </header>
      <article class="note">
        <h1>待归类<svg class="g"><use href="#g-spark"/></svg></h1>
        <hr>
        <fieldset class="todo">
          <legend><svg><use href="#flame"/></svg>待归类 立刻马上分类到象限或收集中</legend>
          <p class="count">0 tasks</p>
        </fieldset>
        <hr>
        <fieldset>
          <legend><svg><use href="#quote"/></svg>待归类 立刻马上分类到象限或收集中</legend>
          <p class="count">0 tasks</p>
        </fieldset>
      </article>
      <div class="thumb" style="height:592px"></div>
    </section>

    <section class="pane">
      <div class="tabbar">
        <div class="tab"><span>不紧急<svg class="g"><use href="#g-zzz"/></svg>又不重要<svg class="g"><use href="#g-drop"/></svg></span><button class="icon"><svg><use href="#pin"/></svg></button></div>
        <button class="icon add"><svg><use href="#plus"/></svg></button>
        <button class="icon list"><svg><use href="#down"/></svg></button>
      </div>
      <header class="view-header">
        <button class="icon off"><svg><use href="#back"/></svg></button><button class="icon off"><svg><use href="#forward"/></svg></button>
        <div class="crumbs"><a href="#">000.Homepage</a><i>/</i><a href="#">001.DAY PLAN</a><i>/</i><span>不紧急<svg class="g"><use href="#g-zzz"/></svg>又不重要<svg class="g"><use href="#g-drop"/></svg></span></div>
        <div class="actions"><button class="icon"><svg><use href="#dashboard"/></svg></button><button class="icon"><svg><use href="#split-v"/></svg></button><button class="icon"><svg><use href="#split-h"/></svg></button><button class="icon"><svg><use href="#align-top"/></svg></button><button class="icon"><svg><use href="#pen-tool"/></svg></button><button class="icon"><svg><use href="#select"/></svg></button><button class="icon"><svg><use href="#sun"/></svg></button><button class="icon soft"><svg><use href="#edit"/></svg></button><button class="icon"><svg><use href="#more"/></svg></button></div>
      </header>
      <article class="note">
        <h1>不紧急<svg class="g"><use href="#g-zzz"/></svg>又不重要<svg class="g"><use href="#g-drop"/></svg></h1>
        <hr>
        <fieldset class="todo">
          <legend><svg><use href="#flame"/></svg>不紧急又不重要 没有时间限制的不重要事项 要做但什么时候做都无所谓</legend>
          <ul class="tasks">
            <li><input type="checkbox" id="e1"><label for="e1"><a class="tag" href="#">#gamedesign/2D</a> 创作参考：<a href="#">杂七杂八的像素画-雏雏</a><svg class="ext"><use href="#ext"/></svg> <svg class="g"><use href="#g-down"/></svg> <svg class="g memo"><use href="#g-memo"/></svg></label></li>
            <li><input type="checkbox" id="e2"><label for="e2"><a class="tag" href="#">#gamedesign/Godot</a> <a href="#">42分钟内解释所有219个 Godot 节点！</a><svg class="ext"><use href="#ext"/></svg> <svg class="g"><use href="#g-down"/></svg> <svg class="g memo"><use href="#g-memo"/></svg></label></li>
            <li><input type="checkbox" id="e3"><label for="e3"><a class="tag" href="#">#gamedesign/Godot</a> <a href="#">HB的Godot游戏开发教程包 - Learn to Make Games in Godot 4</a><svg class="ext"><use href="#ext"/></svg> <svg class="g"><use href="#g-down"/></svg> <svg class="g memo"><use href="#g-memo"/></svg></label></li>
            <li><input type="checkbox" id="e4"><label for="e4"><a class="tag" href="#">#gamedesign/UE</a> <a class="tag" href="#">#project/DRUID</a> <a href="#">【UE5】虚幻5徒手做丁达尔效应光的详细教程</a><svg class="ext"><use href="#ext"/></svg> <svg class="g"><use href="#g-down"/></svg> <svg class="g memo"><use href="#g-memo"/></svg></label></li>
            <li><input type="checkbox" id="e5"><label for="e5">18:24 <a class="tag" href="#">#life/watch</a> 《らんまん》（《烂漫》） <svg class="g"><use href="#g-down"/></svg> <svg class="g memo"><use href="#g-memo"/></svg></label></li>
            <li><input type="checkbox" id="e6"><label for="e6">18:56 <a class="tag" href="#">#life/watch</a> 《勿言推理：特别篇》《勿言推理：广岛篇》 <svg class="g"><use href="#g-down"/></svg> <svg class="g memo"><use href="#g-memo"/></svg></label></li>
            <li><input type="checkbox" id="e7"><label for="e7">15:20 <a class="tag" href="#">#life/watch</a> 《九重紫》《度华年》 <svg class="g"><use href="#g-down"/></svg> <svg class="g memo"><use href="#g-memo"/></svg></label></li>
            <li><input type="checkbox" id="e8"><label for="e8"><a class="tag" href="#">#life/watch</a> 菅田将晖新作品：网飞版《寄生兽》、《Cloud》 <svg class="g"><use href="#g-down"/></svg> <svg class="g memo"><use href="#g-memo"/></svg></label></li>
            <li><input type="checkbox" id="e9"><label for="e9"><a class="tag" href="#">#life/watch</a> 《眷思量》 <svg class="g"><use href="#g-down"/></svg> <svg class="g memo"><use href="#g-memo"/></svg></label></li>
            <li><input type="checkbox" id="e10"><label for="e10"><a class="tag" href="#">#life/watch</a> 土《败犬女主太多了》 <svg class="g"><use href="#g-down"/></svg> <svg class="g memo"><use href="#g-memo"/></svg></label></li>
            <li><input type="checkbox" id="e11"><label for="e11"><a class="tag" href="#">#life/watch</a> 日《杖与剑》 <svg class="g"><use href="#g-down"/></svg> <svg class="g memo"><use href="#g-memo"/></svg></label></li>
          </ul>
          <p class="count">11 tasks</p>
        </fieldset>
        <hr>
        <fieldset>
          <legend><svg><use href="#quote"/></svg>不紧急又不重要 没有时间限制的不重要事项 要做但什么时候做都无所谓</legend>
          <ul class="tasks">
            <li class="done"><input type="checkbox" checked id="f1"><label for="f1"><a class="tag" href="#">#project/DRUID</a><s>&nbsp;<a href="#">UE资产：爱给网</a><svg class="ext"><use href="#ext"/></svg> <svg class="g"><use href="#g-down"/></svg> <svg class="g"><use href="#g-done"/></svg> 2024-07-01</s> <svg class="g memo"><use href="#g-memo"/></svg></label></li>
          </ul>
        </fieldset>
      </article>
      <div class="thumb" style="height:279px"></div>
    </section>

    <section class="pane">
      <div class="tabbar">
        <div class="tab"><span>重要<svg class="g"><use href="#g-fire"/></svg>但不紧急<svg class="g"><use href="#g-zzz"/></svg></span><button class="icon"><svg><use href="#pin"/></svg></button></div>
        <button class="icon add"><svg><use href="#plus"/></svg></button>
        <button class="icon list"><svg><use href="#down"/></svg></button>
      </div>
      <header class="view-header">
        <button class="icon off"><svg><use href="#back"/></svg></button><button class="icon off"><svg><use href="#forward"/></svg></button>
        <div class="crumbs"><a href="#">000.Homepage</a><i>/</i><a href="#">001.DAY PLAN</a><i>/</i><span>重要<svg class="g"><use href="#g-fire"/></svg>但不紧急<svg class="g"><use href="#g-zzz"/></svg></span></div>
        <div class="actions"><button class="icon"><svg><use href="#dashboard"/></svg></button><button class="icon"><svg><use href="#split-v"/></svg></button><button class="icon"><svg><use href="#split-h"/></svg></button><button class="icon"><svg><use href="#align-top"/></svg></button><button class="icon"><svg><use href="#pen-tool"/></svg></button><button class="icon"><svg><use href="#select"/></svg></button><button class="icon"><svg><use href="#sun"/></svg></button><button class="icon soft"><svg><use href="#edit"/></svg></button><button class="icon"><svg><use href="#more"/></svg></button></div>
      </header>
      <article class="note">
        <h1>重要<svg class="g"><use href="#g-fire"/></svg>但不紧急<svg class="g"><use href="#g-zzz"/></svg></h1>
        <hr>
        <fieldset class="todo">
          <legend><svg><use href="#flame"/></svg>重要但不紧急 没有时间限制的重要事项 没事就要做</legend>
          <ul class="tasks">
            <li><input type="checkbox" id="h1"><label for="h1"><a class="tag" href="#">#life</a> <a href="#">居家薄肌训练方法详细教学</a><svg class="ext"><use href="#ext"/></svg> <svg class="g"><use href="#g-up2"/></svg> <svg class="g memo"><use href="#g-memo"/></svg></label></li>
            <li><input type="checkbox" id="h2"><label for="h2"><a class="tag" href="#">#life</a> 价格高腾给付金（受付番号: HK00070777） <svg class="g"><use href="#g-up2"/></svg> <svg class="g memo"><use href="#g-memo"/></svg></label></li>
          </ul>
          <p class="count">2 tasks</p>
        </fieldset>
        <hr>
        <fieldset>
          <legend><svg><use href="#quote"/></svg>重要但不紧急 没有时间限制的重要事项 没事就要做</legend>
          <ul class="tasks">
            <li class="done"><input type="checkbox" checked id="k1"><label for="k1"><a class="tag" href="#">#life</a><s>&nbsp;<a href="#">令和6隅田区物价上涨优先支援福利（新免税家庭福利）</a><svg class="ext"><use href="#ext"/></svg> <svg class="g"><use href="#g-up2"/></svg> <svg class="g"><use href="#g-done"/></svg> 2024-07-19</s> <svg class="g memo"><use href="#g-memo"/></svg></label></li>
            <li class="done"><input type="checkbox" checked id="k2"><label for="k2"><a class="tag" href="#">#Obsidian</a><s>&nbsp;<a href="#">2024-07-13 基于Obsidian构建的个人数字花园</a> <svg class="g"><use href="#g-up2"/></svg> <svg class="g"><use href="#g-done"/></svg> 2024-07-16</s> <svg class="g memo"><use href="#g-memo"/></svg></label></li>
            <li class="done"><input type="checkbox" checked id="k3"><label for="k3"><a class="tag" href="#">#gamedesign/UE</a><s>&nbsp;<a href="#">2024-07-12 在UE5快速搭建个人作品流程解析</a> <svg class="g"><use href="#g-up2"/></svg> <svg class="g"><use href="#g-done"/></svg> 2024-07-14</s> <svg class="g memo"><use href="#g-memo"/></svg></label></li>
            <li class="done"><input type="checkbox" checked id="k4"><label for="k4"><a class="tag" href="#">#日本語/单词</a><s>&nbsp;<a href="#">日语N1+N2 副词合集180组</a><svg class="ext"><use href="#ext"/></svg> <svg class="g"><use href="#g-up2"/></svg> <svg class="g"><use href="#g-done"/></svg> 2024-07-08</s> <svg class="g memo"><use href="#g-memo"/></svg></label></li>
            <li class="done"><input type="checkbox" checked id="k5"><label for="k5"><a class="tag" href="#">#日本語/单词</a><s>&nbsp;<a href="#">日语N1 拟声拟态词 300组</a><svg class="ext"><use href="#ext"/></svg> <svg class="g"><use href="#g-up2"/></svg> <svg class="g"><use href="#g-done"/></svg> 2024-07-08</s> <svg class="g memo"><use href="#g-memo"/></svg></label></li>
            <li class="done"><input type="checkbox" checked id="k6"><label for="k6"><a class="tag" href="#">#日本語/单词</a><s>&nbsp;<a href="#">日语N1 核心动词700个 （350-500）</a><svg class="ext"><use href="#ext"/></svg> <svg class="g"><use href="#g-up2"/></svg> <svg class="g"><use href="#g-done"/></svg> 2024-07-08</s> <svg class="g memo"><use href="#g-memo"/></svg></label></li>
            <li class="done"><input type="checkbox" checked id="k7"><label for="k7"><a class="tag" href="#">#日本語/单词</a><s>&nbsp;<a href="#">日语N1 核心动词700个 （1-350）</a><svg class="ext"><use href="#ext"/></svg> <svg class="g"><use href="#g-up2"/></svg> <svg class="g"><use href="#g-done"/></svg> 2024-07-08</s> <svg class="g memo"><use href="#g-memo"/></svg></label></li>
            <li class="done"><input type="checkbox" checked id="k8"><label for="k8"><a class="tag" href="#">#日本語/单词</a><s>&nbsp;<a href="#">日语N1 核心动词700个 （500-700）</a><svg class="ext"><use href="#ext"/></svg> <svg class="g"><use href="#g-up2"/></svg> <svg class="g"><use href="#g-done"/></svg> 2024-07-08</s> <svg class="g memo"><use href="#g-memo"/></svg></label></li>
            <li class="done"><input type="checkbox" checked id="k9"><label for="k9"><a class="tag" href="#">#日本語</a><s>&nbsp;<a href="#">历年日语N1真题汇总（更新至2023年7月）</a><svg class="ext"><use href="#ext"/></svg> <svg class="g"><use href="#g-up2"/></svg> <svg class="g"><use href="#g-done"/></svg> 2024-07-08</s> <svg class="g memo"><use href="#g-memo"/></svg></label></li>
            <li class="done"><input type="checkbox" checked id="k10"><label for="k10"><a class="tag" href="#">#abroad</a><s>&nbsp;<a href="#">研究计划书做到这四点锁住日本美术类名校</a><svg class="ext"><use href="#ext"/></svg> <svg class="g"><use href="#g-up2"/></svg> <svg class="g"><use href="#g-done"/></svg> 2024-07-01</s> <svg class="g memo"><use href="#g-memo"/></svg></label></li>
          </ul>
        </fieldset>
      </article>
      <div class="thumb" style="height:372px"></div>
    </section>

    <section class="pane">
      <div class="tabbar">
        <div class="tab"><span>收集<svg class="g"><use href="#g-heart"/></svg></span><button class="icon"><svg><use href="#pin"/></svg></button></div>
        <button class="icon add"><svg><use href="#plus"/></svg></button>
        <button class="icon list"><svg><use href="#down"/></svg></button>
      </div>
      <header class="view-header">
        <button class="icon off"><svg><use href="#back"/></svg></button><button class="icon off"><svg><use href="#forward"/></svg></button>
        <div class="crumbs"><a href="#">000.Homepage</a></div>
        <div class="actions"><button class="icon"><svg><use href="#dashboard"/></svg></button><button class="icon"><svg><use href="#split-v"/></svg></button><button class="icon"><svg><use href="#split-h"/></svg></button><button class="icon"><svg><use href="#align-top"/></svg></button><button class="icon"><svg><use href="#pen-tool"/></svg></button><button class="icon"><svg><use href="#select"/></svg></button><button class="icon"><svg><use href="#sun"/></svg></button><button class="icon soft"><svg><use href="#edit"/></svg></button><button class="icon"><svg><use href="#more"/></svg></button></div>
      </header>
      <article class="note">
        <h1>收集<svg class="g"><use href="#g-heart"/></svg></h1>
        <hr>
        <fieldset class="todo">
          <legend><svg><use href="#flame"/></svg>收集 犹豫要不要做的先保留的事项</legend>
          <ul class="tasks">
            <li><input type="checkbox" id="m1"><label for="m1">14:16 <a class="tag" href="#">#career</a> 关于spi，这个网站是很多学校会推荐去做的模拟测试，大家可以根据时间去参加虽然游戏公司的题目和这个不是一模一样，但是大家可以感受一下题型和氛围<a href="#">適性テスト</a><svg class="ext"><use href="#ext"/></svg><a href="#">言語・非言語Webテスト</a><svg class="ext"><use href="#ext"/></svg> <svg class="g"><use href="#g-down2"/></svg> <svg class="g memo"><use href="#g-memo"/></svg></label></li>
            <li><input type="checkbox" id="m2"><label for="m2"><a class="tag" href="#">#cook</a> <a href="#">只要两个鸡蛋 一盒酸奶 谁都会做酸奶蛋糕！</a><svg class="ext"><use href="#ext"/></svg> <svg class="g"><use href="#g-down2"/></svg> <svg class="g memo"><use href="#g-memo"/></svg></label></li>
            <li><input type="checkbox" id="m3"><label for="m3"><a class="tag" href="#">#gamedesign</a> EEVEE写实渲染风格：<a href="#">半城淤泥的个人空</a><span class="keep"><a href="#">间</a><svg class="ext"><use href="#ext"/></svg></span> <svg class="g"><use href="#g-down2"/></svg> <svg class="g memo"><use href="#g-memo"/></svg></label></li>
            <li><input type="checkbox" id="m4"><label for="m4"><a class="tag" href="#">#gamedesign</a> Blender开源集成启动器：<a href="#">Blender战略级工具铁锅炖启动器&amp;相机助手-只是一瓶辣椒酱</a><svg class="ext"><use href="#ext"/></svg> <svg class="g"><use href="#g-down2"/></svg> <svg class="g memo"><use href="#g-memo"/></svg></label></li>
            <li><input type="checkbox" id="m5"><label for="m5"><a class="tag" href="#">#gamedesign</a> Blender三渲二角色制作：<a href="#">永夜えいや的个<span class="keep">人空间</span></a><svg class="ext"><use href="#ext"/></svg>，更新频率偏低，有素体资源 <svg class="g"><use href="#g-down2"/></svg> <svg class="g memo"><use href="#g-memo"/></svg></label></li>
            <li><input type="checkbox" id="m6"><label for="m6"><a class="tag" href="#">#gamedesign</a> 由<a href="#">boringlabulabula</a><svg class="ext"><use href="#ext"/></svg>整理的地编软件学习全流程推荐表<a href="#">地编软件学习全流程推荐表</a><svg class="ext"><use href="#ext"/></svg> <svg class="g"><use href="#g-down2"/></svg> <svg class="g memo"><use href="#g-memo"/></svg></label></li>
            <li><input type="checkbox" id="m7"><label for="m7"><a class="tag" href="#">#gamedesign</a> 场景概念向AI生成：<a href="#">pixelcat像素猫的个人<span class="keep">空间</span></a><svg class="ext"><use href="#ext"/></svg> <svg class="g"><use href="#g-down2"/></svg> <svg class="g memo"><use href="#g-memo"/></svg></label></li>
            <li><input type="checkbox" id="m8"><label for="m8"><a class="tag" href="#">#gamedesign</a> AI绘画模型分享：<a href="#">Erio入水的艾莉欧的个人<span class="keep">空间</span></a><svg class="ext"><use href="#ext"/></svg> <svg class="g"><use href="#g-down2"/></svg> <svg class="g memo"><use href="#g-memo"/></svg></label></li>
          </ul>
        </fieldset>
      </article>
      <div class="thumb" style="height:61px"></div>
    </section>
  </main>

  <footer class="status">
    <svg><use href="#send"/></svg><svg><use href="#terminal"/></svg><svg><use href="#check"/></svg>
    <span>main</span><span>All done</span><span>0 条反向链接</span><svg><use href="#book"/></svg><span>98 个词</span><span>313 个字符</span>
    <span class="plan"><svg><use href="#layout"/></svg>DAYPLAN</span><svg><use href="#leaf"/></svg>
  </footer>
</div>
</body>
</html>
```
FILE: styles.css
```css
:root {
  --line: #e2e2e2;
  --text: #444;
  --muted: #8a8a8a;
  --faint: #aaa;
}

* { box-sizing: border-box; }

body {
  margin: 0;
  background: #fff;
  color: var(--text);
  font: 16px/24px "Open Sans", "Noto Sans CJK SC Light", "Noto Sans CJK SC", sans-serif;
  text-spacing-trim: space-all;
}

.sprite { display: none; }

button {
  padding: 0;
  border: 0;
  background: none;
  color: inherit;
  font: inherit;
}

ul { margin: 0; padding: 0; list-style: none; }

svg {
  flex: none;
  width: 18px;
  height: 18px;
  fill: none;
  stroke: currentColor;
  stroke-width: 1.75;
  stroke-linecap: round;
  stroke-linejoin: round;
}

.icon {
  display: flex;
  flex: none;
  align-items: center;
  justify-content: center;
  color: var(--muted);
}

/* colour glyphs sit in the text like characters */
.g {
  width: 22px;
  height: 16px;
  stroke: none;
  stroke-width: 1;
  stroke-linecap: butt;
  vertical-align: -3px;
}

.strike { stroke: var(--strike, none); }

.keep { white-space: nowrap; }

.app { display: flex; height: 100vh; overflow: hidden; }

/* ribbon */
.ribbon {
  flex: none;
  width: 44px;
  border-right: 1px solid var(--line);
}

.ribbon-top {
  display: flex;
  align-items: center;
  justify-content: center;
  width: 44px;
  height: 40px;
  margin-bottom: 5px;
  border-bottom: 1px solid var(--line);
  background: #fff;
}

.ribbon-group { margin-bottom: 14px; }
.ribbon-group .icon { width: 43px; height: 32px; }

/* sidebar */
.sidebar {
  display: flex;
  flex: none;
  flex-direction: column;
  width: 336px;
}

.side-tabs {
  display: flex;
  height: 40px;
  padding: 6px 0 0 15px;
  border-bottom: 1px solid var(--line);
}

.side-tab { width: 57px; height: 34px; }

.side-tab.active {
  border: 1px solid var(--line);
  border-bottom: 0;
  border-radius: 6px 6px 0 0;
  background: #fff;
  color: #333;
}

.side-tab.wide { width: 102px; }

.files { flex: 1; min-height: 0; overflow: hidden; }

.file-actions {
  display: flex;
  gap: 14px;
  padding: 12px 14px 14px;
}

.tree { color: #777; font-size: 13px; line-height: 27px; }
.tree li { display: flex; align-items: center; gap: 4px; padding-left: 16px; }
.tree svg { width: 16px; height: 16px; stroke-width: 2; }
.key { font-weight: 700; }
.key span { text-decoration: underline; text-decoration-thickness: 2px; text-decoration-color: #aaa; text-underline-offset: 2px; text-decoration-skip-ink: none; }

.calendar { border-top: 1px solid var(--line); }

.calendar-body {
  position: relative;
  height: 267px;
  padding: 12px 27px 0 16px;
  overflow: hidden;
}

.month { display: flex; align-items: center; margin-right: -7px; padding-left: 4px; }
.month-name { flex: 1; }
.month .icon { width: 26px; }
.today { padding: 0 6px; color: var(--muted); font-size: 13px; }

table { width: 100%; border-collapse: collapse; table-layout: fixed; font-size: 13px; line-height: 18px; text-align: center; }
th { height: 31px; padding: 0; color: #999; font-size: 12px; font-weight: 400; }
th.w { font-weight: 600; color: var(--muted); }
td { height: 35px; padding: 2px 0 0; vertical-align: top; }
.wk { color: var(--muted); }
.out { color: #b0b0b0; }
.now { color: #000; font-weight: 700; }

.dot::after {
  display: block;
  width: 4px;
  height: 4px;
  margin: 1px auto 0;
  border-radius: 50%;
  background: #aaa;
  content: "";
}

.dot.ring::after {
  width: 11px;
  border-radius: 0;
  background: radial-gradient(circle at 2px 2px, #aaa 0 2px, transparent 2px), radial-gradient(circle at 9px 2px, #fff 0 1px, #aaa 1px 2px, transparent 2px);
}

.thumb {
  position: absolute;
  top: 81px;
  right: 2px;
  width: 5px;
  border-radius: 3px;
  background: #e4e4e4;
}

.calendar .thumb { top: 3px; bottom: 13px; }

.vault {
  display: flex;
  align-items: center;
  gap: 8px;
  height: 43px;
  padding: 0 13px 0 15px;
  border-top: 1px solid var(--line);
  color: #333;
  font-size: 13px;
  font-weight: 500;
}

.vault > svg { color: var(--faint); width: 16px; height: 16px; }
.vault span { flex: 1; }
.vault .icon + .icon { margin-left: 4px; }

/* workspace */
.workspace {
  display: grid;
  flex: 1;
  grid-template: 1fr 1fr / 83fr 83fr 52fr;
  min-width: 0;
}

.pane {
  position: relative;
  display: flex;
  flex-direction: column;
  min-width: 0;
  min-height: 0;
  overflow: hidden;
  border-left: 1px solid var(--line);
}

.pane:nth-child(-n+3) { border-bottom: 1px solid var(--line); }

.tabbar {
  display: flex;
  flex: none;
  height: 40px;
  padding: 6px 8px 0 17px;
  border-bottom: 1px solid var(--line);
}

.tabbar.window { padding-right: 0; }

.tab {
  position: relative;
  display: flex;
  align-items: center;
  justify-content: space-between;
  width: 202px;
  height: 34px;
  padding: 0 7px 2px 9px;
  border: 1px solid var(--line);
  border-bottom: 0;
  border-radius: 8px 8px 0 0;
  background: #fff;
  color: #666;
  font-size: 13px;
}

.tab::before,
.tab::after {
  position: absolute;
  bottom: 0;
  left: -8px;
  width: 8px;
  height: 8px;
  border: solid var(--line);
  border-width: 0 1px 1px 0;
  border-radius: 0 0 7px 0;
  background: #fff;
  box-shadow: 3px 3px 0 #fff;
  content: "";
}

.tab::after {
  right: -8px;
  left: auto;
  border-width: 0 0 1px 1px;
  border-radius: 0 0 0 7px;
  box-shadow: -3px 3px 0 #fff;
}

.tab .g, .crumbs .g { width: 18px; height: 13px; vertical-align: -2px; }

.add { width: 36px; height: 30px; }
.list { width: 32px; height: 30px; margin-left: auto; }
.list-end { width: 32px; height: 28px; }
.win { width: 44px; height: 28px; color: #222; }

.view-header {
  display: flex;
  flex: none;
  align-items: center;
  gap: 10px;
  height: 36px;
  padding: 0 6px 0 17px;
  font-size: 13px;
}

.off { color: #c4c4c4; }

.crumbs {
  flex: 1;
  min-width: 0;
  margin: 0 34px 0 7px;
  overflow: hidden;
  color: var(--muted);
  white-space: nowrap;
}

.crumbs a { color: #777; font-size: 12px; text-decoration: underline; text-decoration-color: #999; text-underline-offset: 4px; text-decoration-skip-ink: none; }
.crumbs i { padding: 0 5px; font-style: normal; }

.actions { display: flex; }
.actions .icon { width: 36px; height: 24px; color: #666; }
.actions .soft { color: var(--muted); }

.note {
  flex: 1;
  min-height: 0;
  padding: 33px 10px 0 32px;
  overflow: hidden;
}

h1 {
  margin: 0 0 30px;
  color: #ff3b30;
  font: 700 24px/32px "Open Sans", "Noto Sans CJK SC", sans-serif;
}

h1 .g { width: 32px; height: 24px; vertical-align: -4px; }

hr { height: 2px; margin: 0 0 23px; border: 0; background: var(--line); }

fieldset {
  min-width: 0;
  margin: 0 0 32px;
  padding: 14px 10px 11px 14px;
  border: 1px solid #ccc;
  border-radius: 5px;
}

legend {
  display: flex;
  align-items: center;
  gap: 3px;
  height: 19px;
  padding: 0 6px 3px 7px;
  color: var(--muted);
  font: 500 10px/16px "Noto Sans CJK SC", sans-serif;
}

.todo { border-color: #7fe0d8; }
.todo legend { color: #12bdb3; }

/* tasks */
.tasks { padding-left: 22px; }

.tasks li {
  display: flex;
  align-items: flex-start;
  gap: 8px;
  margin-bottom: 4px;
}

.tasks li:nth-child(even) { margin-bottom: 5px; }
.tasks li:last-child { margin-bottom: 0; }

.tasks label { flex: 1; min-width: 0; }

.tasks input {
  display: flex;
  flex: none;
  align-items: center;
  justify-content: center;
  width: 13px;
  height: 13px;
  margin: 5px 0 0;
  border: 1px solid #999;
  border-radius: 4px;
  appearance: none;
}

.tasks input:checked { border-color: #111; background: #111; }

.tasks input:checked::before {
  width: 4px;
  height: 7px;
  margin-top: -2px;
  border: solid #fff;
  border-width: 0 1px 1px 0;
  transform: rotate(42deg);
  content: "";
}

.dropped input { border-color: transparent; }
.dropped input::before { width: 9px; height: 2px; background: #bbb; content: ""; }

.tasks a {
  color: #000;
  text-decoration: underline;
  text-decoration-thickness: 1px;
  text-decoration-skip-ink: none;
  text-underline-offset: 3px;
}

.tasks .tag {
  display: inline-block;
  padding: 0 8px;
  color: var(--muted);
  font-size: 12px;
  line-height: 16px;
  text-decoration: none;
}

.ext { width: 14px; height: 14px; margin-left: 3px; color: var(--muted); vertical-align: -1px; }

.memo { margin-left: 1px; vertical-align: -5px; }
.skip { vertical-align: -5px; }

.done { --strike: #777; color: #777; }
.dropped { --strike: #aaa; color: #aaa; }
.tasks .done .tag { text-decoration: line-through; }

.count { margin: 0 0 0 30px; color: var(--faint); }
.tasks + .count { margin-top: 19px; }

/* status bar floats over the last pane */
.status {
  position: fixed;
  right: 0;
  bottom: 0;
  display: flex;
  align-items: center;
  gap: 11px;
  height: 32px;
  padding: 0 7px 0 34px;
  background: #fff;
  color: var(--faint);
  font-size: 11px;
}

.plan { display: flex; align-items: center; gap: 2px; }
```
